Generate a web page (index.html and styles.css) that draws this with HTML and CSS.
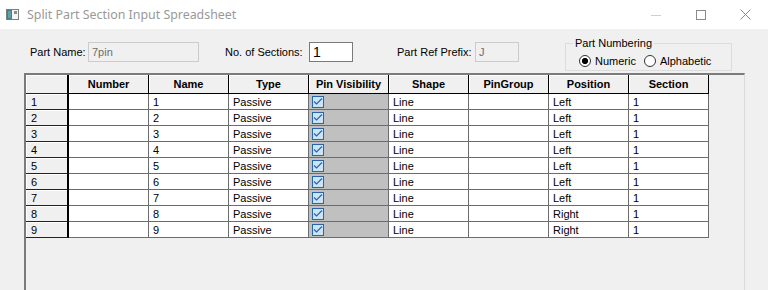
FILE: index.html
```html
<!DOCTYPE html>
<html lang="en">

<head>
    <meta charset="UTF-8">
    <meta name="viewport" content="width=device-width, initial-scale=1.0">
    <title>Split Part Section Input Spreadsheet</title>
    <link rel="stylesheet" href="styles.css">
</head>

<body>
    <div class="titlebar">
        <svg class="app-icon" width="13" height="11" viewBox="0 0 13 11">
            <rect x="0.5" y="0.5" width="12" height="10" fill="#f4f4f4" stroke="#7d7d7d" />
            <rect x="1" y="1" width="5" height="9" fill="#3f7f93" />
            <rect x="2" y="2" width="3" height="7" fill="#5aa3a0" />
            <rect x="8" y="2" width="3" height="3" fill="#8a8a8a" />
        </svg>
        <span class="title">Split Part Section Input Spreadsheet</span>
        <div class="controls">
            <span class="ctl">
                <svg width="10" height="10" viewBox="0 0 10 10"><path d="M0 5.5h10" stroke="#cfcfcf" /></svg>
            </span>
            <span class="ctl">
                <svg width="10" height="10" viewBox="0 0 10 10"><rect x="0.5" y="0.5" width="9" height="9" fill="none" stroke="#8a8a8a" /></svg>
            </span>
            <span class="ctl">
                <svg width="11" height="11" viewBox="0 0 11 11"><path d="M0.5 0.5l10 10M10.5 0.5l-10 10" stroke="#8a8a8a" /></svg>
            </span>
        </div>
    </div>

    <div class="fields">
        <label class="lbl lbl-name">Part Name:</label>
        <input class="txt txt-name" type="text" value="7pin" disabled>
        <label class="lbl lbl-sections">No. of Sections:</label>
        <input class="txt txt-sections" type="text" value="1">
        <label class="lbl lbl-prefix">Part Ref Prefix:</label>
        <input class="txt txt-prefix" type="text" value="J" disabled>
        <fieldset class="numbering">
            <legend>Part Numbering</legend>
            <label class="radio"><input type="radio" name="numbering" checked><span>Numeric</span></label>
            <label class="radio"><input type="radio" name="numbering"><span>Alphabetic</span></label>
        </fieldset>
    </div>

    <div class="sheet-wrap">
        <table class="sheet">
            <thead>
                <tr>
                    <th class="rowhead"></th>
                    <th>Number</th>
                    <th>Name</th>
                    <th>Type</th>
                    <th>Pin Visibility</th>
                    <th>Shape</th>
                    <th>PinGroup</th>
                    <th>Position</th>
                    <th>Section</th>
                </tr>
            </thead>
            <tbody id="rows"></tbody>
        </table>
    </div>

    <script>
        const positions = ["Left", "Left", "Left", "Left", "Left", "Left", "Left", "Right", "Right"];
        const body = document.getElementById("rows");

        positions.forEach((pos, i) => {
            const n = i + 1;
            const tr = document.createElement("tr");
            tr.innerHTML =
                `<th class="rowhead">${n}</th>` +
                `<td></td>` +
                `<td>${n}</td>` +
                `<td>Passive</td>` +
                `<td class="vis"><span class="check"><svg width="10" height="9" viewBox="0 0 10 9"><path d="M1 4.5l2.5 2.5 5.5-5.5" fill="none" stroke="#2b65a6" stroke-width="1.2" /></svg></span></td>` +
                `<td>Line</td>` +
                `<td></td>` +
                `<td>${pos}</td>` +
                `<td>1</td>`;
            body.appendChild(tr);
        });
    </script>
</body>

</html>
```

FILE: styles.css
```css
body {
    margin: 0;
    width: 768px;
    height: 290px;
    overflow: hidden;
    background-color: #f0f0f0;
    font-family: "Liberation Sans", Arial, sans-serif;
    font-size: 11px;
    color: #000;
}

/* window title */
.titlebar {
    display: flex;
    align-items: center;
    height: 29px;
    background: #fff;
}

.app-icon {
    margin-left: 6px;
}

.title {
    margin-left: 8px;
    font-family: "Noto Sans", sans-serif;
    font-size: 12.4px;
    color: #999;
}

.controls {
    display: flex;
    margin-left: auto;
}

.ctl {
    display: flex;
    align-items: center;
    justify-content: center;
    width: 45px;
    height: 29px;
}

/* top fields */
.fields {
    display: flex;
    align-items: center;
    height: 20px;
    margin-top: 13px;
}

.lbl {
    font-size: 11px;
}

.lbl-name {
    width: 58px;
    margin-left: 30px;
}

.lbl-sections {
    width: 84px;
    margin-left: 26px;
}

.lbl-prefix {
    width: 78px;
    margin-left: 44px;
}

.txt {
    box-sizing: border-box;
    height: 20px;
    margin: 0;
    padding: 0 3px;
    font-family: "Liberation Sans", Arial, sans-serif;
    font-size: 11px;
    border: 1px solid #7a7a7a;
    background: #fff;
    outline: none;
}

.txt:disabled {
    border-color: #cccccc;
    background: #f0f0f0;
    color: #6d6d6d;
}

.txt-name {
    width: 111px;
}

.txt-sections {
    width: 44px;
    font-size: 14px;
}

.txt-prefix {
    width: 44px;
}

.numbering {
    box-sizing: border-box;
    align-self: flex-start;
    display: flex;
    width: 167px;
    height: 34px;
    margin: -5px 0 0 46px;
    padding: 0 0 0 13px;
    border: 1px solid #dcdcdc;
}

.numbering legend {
    margin-left: -6px;
    padding: 0 2px;
    font-size: 11px;
    line-height: 12px;
}

.radio {
    display: flex;
    align-items: center;
    margin-top: 6px;
    height: 12px;
    font-size: 11px;
}

.radio+.radio {
    margin-left: 8px;
}

.radio input {
    appearance: none;
    box-sizing: border-box;
    width: 12px;
    height: 12px;
    margin: 0 4px 0 0;
    border: 1px solid #333;
    border-radius: 50%;
    background: #fff;
}

.radio input:checked {
    background: radial-gradient(circle, #000 0 2.8px, #fff 3.3px);
}

/* spreadsheet */
.sheet-wrap {
    box-sizing: border-box;
    width: 721px;
    height: 217px;
    margin: 11px 0 0 24px;
    border-top: 2px solid #7b7b7b;
    border-left: 2px solid #7b7b7b;
    border-right: 1px solid #dadada;
    background: #f0f0f0;
}

.sheet {
    border-collapse: separate;
    border-spacing: 0;
    table-layout: fixed;
    width: 683px;
}

.sheet th,
.sheet td {
    box-sizing: border-box;
    width: 80px;
    height: 16px;
    padding: 0 0 0 4px;
    border-right: 1px solid #6c6c6c;
    border-bottom: 1px solid #6c6c6c;
    font-size: 11px;
    line-height: 14px;
    text-align: left;
    white-space: nowrap;
    overflow: hidden;
    background: #fff;
}

.sheet thead th {
    height: 19px;
    padding: 0;
    text-align: center;
    font-weight: bold;
    background: #f0f0f0;
    border-right-color: #000;
    border-bottom-color: #000;
    box-shadow: inset 1px 1px 0 #fff;
}

.sheet .rowhead {
    width: 43px;
    padding-left: 5px;
    font-weight: normal;
    background: #f0f0f0;
    border-right: 2px solid #000;
    border-bottom-color: #222;
    box-shadow: inset 1px 1px 0 #fff;
}

.sheet td.vis {
    padding-left: 3px;
    background: #c0c0c0;
}

.check {
    display: flex;
    align-items: center;
    justify-content: center;
    box-sizing: border-box;
    width: 12px;
    height: 12px;
    border: 1px solid #2b65a6;
    background: #cce4f7;
}
```
